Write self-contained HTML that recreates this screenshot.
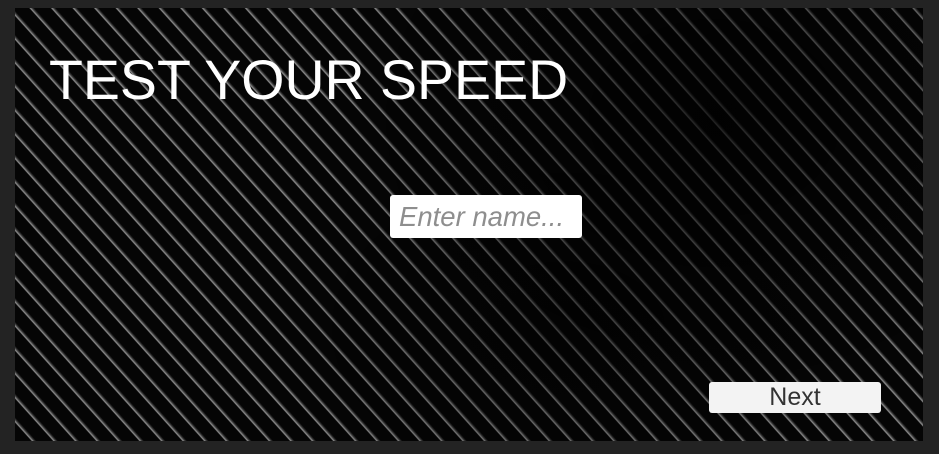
<!DOCTYPE html>
<html><head><meta charset="utf-8"><style>
html,body{margin:0;padding:0;}
body{width:939px;height:454px;background:#232323;position:relative;overflow:hidden;font-family:"Liberation Sans",sans-serif;}
#scene{position:absolute;left:15px;top:8px;width:908px;height:433px;background:#050505;overflow:hidden;}
#stripes{position:absolute;inset:0;
background:
repeating-linear-gradient(48deg, rgba(0,0,0,0) 0px, rgba(0,0,0,0) 12px, rgba(225,225,225,0.65) 13px, rgba(150,150,150,0.35) 14.5px, rgba(0,0,0,0) 16px);
}
#shade{position:absolute;inset:0;background:
radial-gradient(ellipse 380px 300px at 700px 110px, rgba(0,0,0,0.75), rgba(0,0,0,0) 100%),
radial-gradient(ellipse 300px 200px at 550px 320px, rgba(0,0,0,0.45), rgba(0,0,0,0) 100%);}
h1{position:absolute;left:34px;top:42px;margin:0;font-weight:normal;color:#fff;font-size:55.5px;line-height:60px;}
#inp{position:absolute;left:375px;top:187px;width:192px;height:43px;background:#fff;border-radius:3px;}
#inp span{position:absolute;left:9px;top:6px;font-style:italic;color:#8e8e8e;font-size:27.5px;}
#btn{position:absolute;left:694px;top:374px;width:172px;height:31px;background:#f3f3f3;border-radius:3px;text-align:center;color:#333;font-size:25px;line-height:31px;}
</style></head><body>
<div id="scene">
<div id="stripes"></div>
<div id="shade"></div>
<h1>TEST YOUR SPEED</h1>
<div id="inp"><span>Enter name...</span></div>
<div id="btn">Next</div>
</div>
</body></html>
